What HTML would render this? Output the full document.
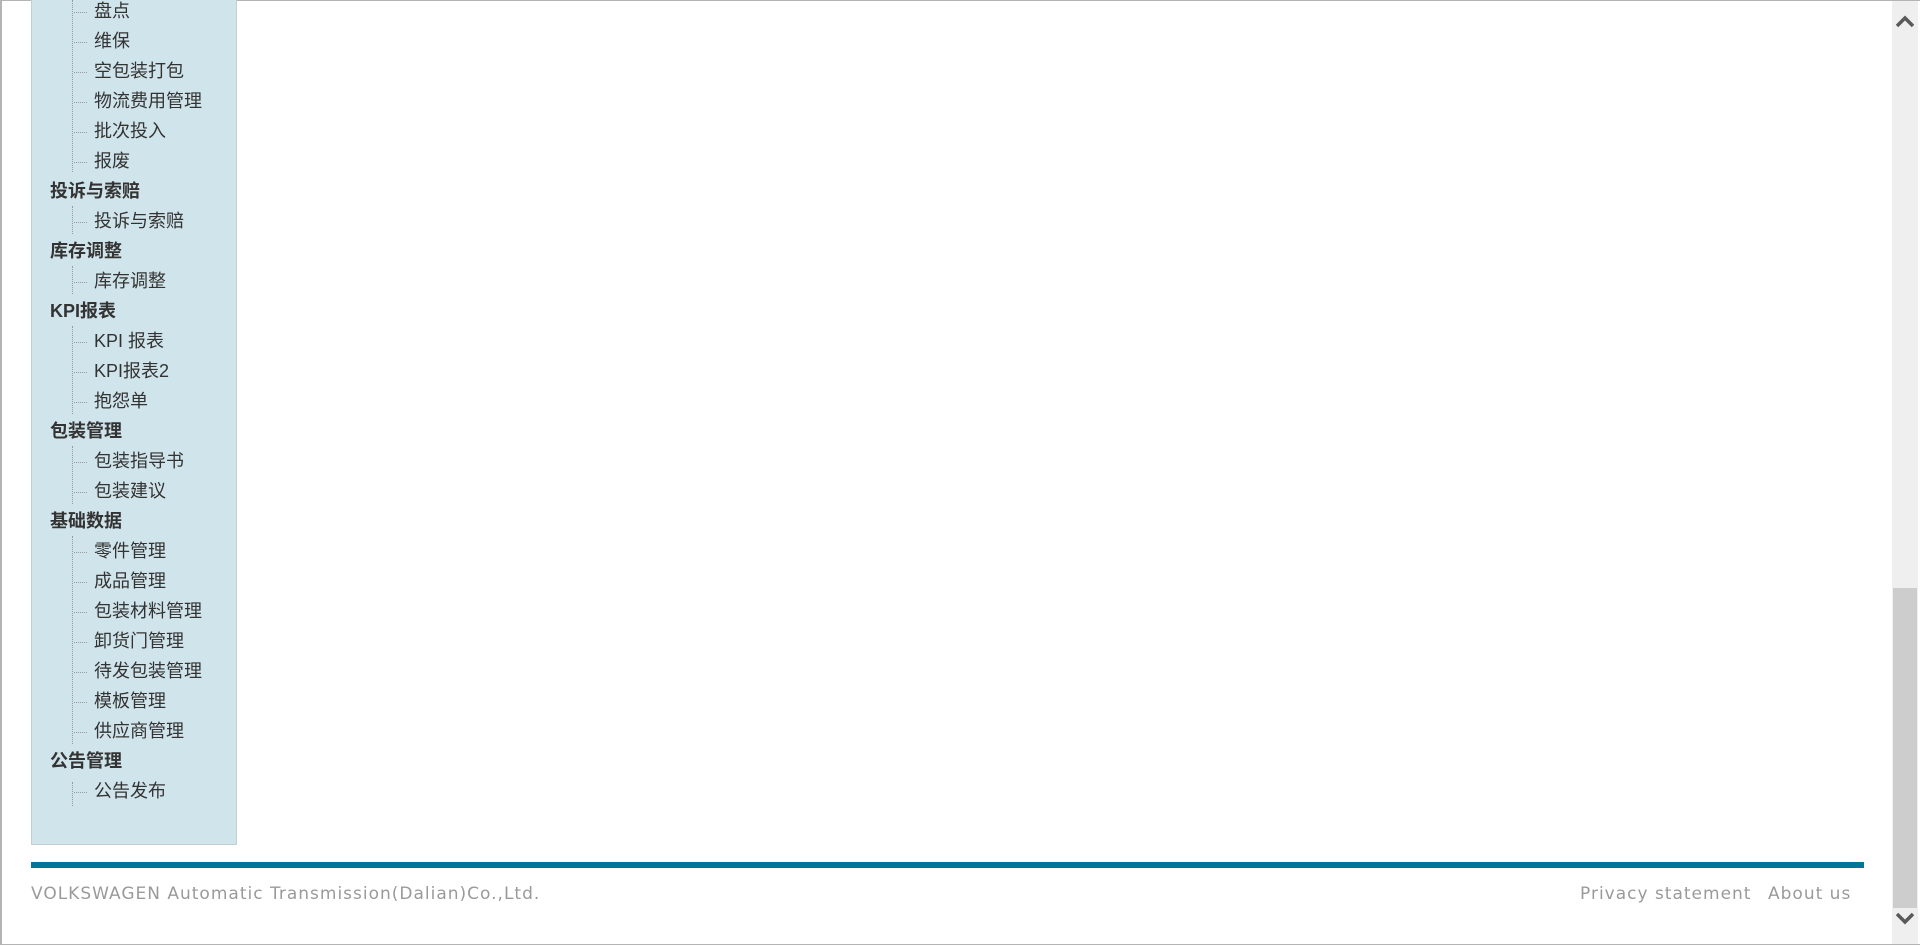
<!DOCTYPE html>
<html><head><meta charset="utf-8"><style>
html,body{margin:0;padding:0;width:1920px;height:945px;overflow:hidden;background:#fff;}
#frame{position:absolute;left:0;top:0;width:1918px;height:943px;border:1px solid #b4b4b4;border-left:2px solid #b4b4b4;box-sizing:content-box;}
#side{position:absolute;left:31px;top:-10px;width:204px;height:854px;background:#d0e4eb;border:1px solid #c4cfd3;border-top:none;}
.r{position:absolute;font-family:"Liberation Sans","Noto Sans CJK SC",sans-serif;font-size:18px;color:#333;line-height:30px;white-space:nowrap;}
.h{left:50px;font-weight:bold;color:#333;}
.c{left:94px;}
.vl{position:absolute;left:72px;width:0;border-left:1px dotted #999;}
.hl{position:absolute;left:74px;width:13px;height:0;border-top:1px dotted #999;}
#bar{position:absolute;left:31px;top:862px;width:1833px;height:6px;background:#00779a;}
.f{position:absolute;top:882px;font-family:"DejaVu Sans",sans-serif;font-size:17px;color:#9a9a9a;line-height:24px;white-space:nowrap;letter-spacing:1px;}
#sb{position:absolute;left:1892px;top:1px;width:26px;height:943px;background:#efefef;}
#th{position:absolute;left:1893px;top:588px;width:24px;height:320px;background:#cdcdcd;}
</style></head><body>
<div id="frame"></div>
<div id="side"></div>
<div id="bar"></div>
<div class="f" style="left:31px">VOLKSWAGEN Automatic Transmission(Dalian)Co.,Ltd.</div>
<div class="f" style="left:1580px">Privacy statement</div>
<div class="f" style="left:1768px">About us</div>
<div id="sb"></div>
<div id="th"></div>
<svg style="position:absolute;left:1895px;top:14px" width="20" height="14"><path d="M2 12 L10 4 L18 12" stroke="#5a5a5a" stroke-width="3.5" fill="none"/></svg>
<svg style="position:absolute;left:1895px;top:912px" width="20" height="14"><path d="M2 2 L10 10 L18 2" stroke="#5a5a5a" stroke-width="3.5" fill="none"/></svg>
<div style="position:absolute;left:0;top:0">
<div class="r c" style="top:-4px">盘点</div>
<div class="r c" style="top:26px">维保</div>
<div class="r c" style="top:56px">空包装打包</div>
<div class="r c" style="top:86px">物流费用管理</div>
<div class="r c" style="top:116px">批次投入</div>
<div class="r c" style="top:146px">报废</div>
<div class="vl" style="top:0;height:172px"></div>
<div class="hl" style="top:12px"></div><div class="hl" style="top:42px"></div><div class="hl" style="top:72px"></div><div class="hl" style="top:102px"></div><div class="hl" style="top:132px"></div><div class="hl" style="top:162px"></div>
<div class="r h" style="top:176px">投诉与索赔</div>
<div class="r c" style="top:206px">投诉与索赔</div>
<div class="vl" style="top:206px;height:28px"></div><div class="hl" style="top:222px"></div>
<div class="r h" style="top:236px">库存调整</div>
<div class="r c" style="top:266px">库存调整</div>
<div class="vl" style="top:266px;height:28px"></div><div class="hl" style="top:282px"></div>
<div class="r h" style="top:296px">KPI报表</div>
<div class="r c" style="top:326px">KPI 报表</div>
<div class="r c" style="top:356px">KPI报表2</div>
<div class="r c" style="top:386px">抱怨单</div>
<div class="vl" style="top:326px;height:88px"></div><div class="hl" style="top:342px"></div><div class="hl" style="top:372px"></div><div class="hl" style="top:402px"></div>
<div class="r h" style="top:416px">包装管理</div>
<div class="r c" style="top:446px">包装指导书</div>
<div class="r c" style="top:476px">包装建议</div>
<div class="vl" style="top:446px;height:58px"></div><div class="hl" style="top:462px"></div><div class="hl" style="top:492px"></div>
<div class="r h" style="top:506px">基础数据</div>
<div class="r c" style="top:536px">零件管理</div>
<div class="r c" style="top:566px">成品管理</div>
<div class="r c" style="top:596px">包装材料管理</div>
<div class="r c" style="top:626px">卸货门管理</div>
<div class="r c" style="top:656px">待发包装管理</div>
<div class="r c" style="top:686px">模板管理</div>
<div class="r c" style="top:716px">供应商管理</div>
<div class="vl" style="top:536px;height:208px"></div>
<div class="hl" style="top:552px"></div><div class="hl" style="top:582px"></div><div class="hl" style="top:612px"></div><div class="hl" style="top:642px"></div><div class="hl" style="top:672px"></div><div class="hl" style="top:702px"></div><div class="hl" style="top:732px"></div>
<div class="r h" style="top:746px">公告管理</div>
<div class="r c" style="top:776px">公告发布</div>
<div class="vl" style="top:782px;height:24px"></div><div class="hl" style="top:792px"></div>
</div>
</body></html>
